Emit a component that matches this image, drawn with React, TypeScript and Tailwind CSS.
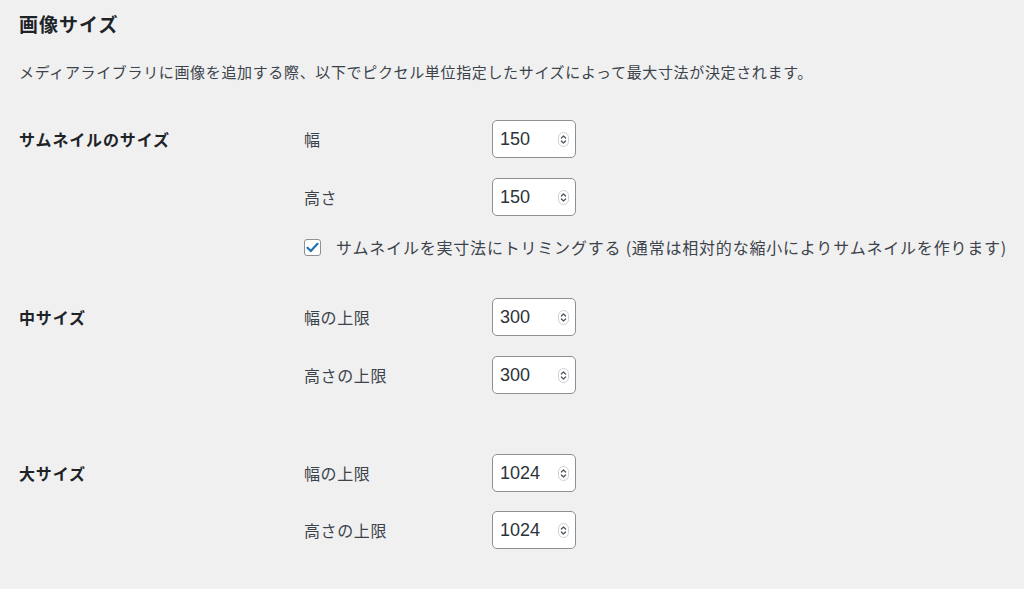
import React from "react";

const CJK = { fontFamily: '"Noto Sans CJK JP", "Noto Sans", sans-serif' };

function Spinner() {
  return (
    <svg width="11" height="15" viewBox="0 0 11 15" className="shrink-0">
      <rect x="0.5" y="0.5" width="10" height="14" rx="5" fill="#ffffff" stroke="#cfd0d3" />
      <path d="M3.4 6 L5.5 4 L7.6 6" fill="none" stroke="#50575e" strokeWidth="1.3" strokeLinecap="round" strokeLinejoin="round" />
      <path d="M3.4 9 L5.5 11 L7.6 9" fill="none" stroke="#50575e" strokeWidth="1.3" strokeLinecap="round" strokeLinejoin="round" />
    </svg>
  );
}

function NumField({ label, value }: { label: string; value: string }) {
  return (
    <div className="flex items-center h-[38px]">
      <div className="w-[188px] text-[16px] tracking-[0.6px] text-[#3c434a]" style={CJK}>
        {label}
      </div>
      <div className="w-[84px] h-[38px] bg-white border border-[#8c8f94] rounded-[5px] flex items-center justify-between pl-[7px] pr-[6px]">
        <span
          className="text-[18px] text-[#2c3338] leading-none"
          style={{ fontFamily: '"Liberation Sans", Arial, sans-serif' }}
        >
          {value}
        </span>
        <Spinner />
      </div>
    </div>
  );
}

function RowLabel({ children }: { children: React.ReactNode }) {
  return (
    <div className="w-[285px] shrink-0">
      <div
        className="h-[38px] flex items-center font-bold text-[16px] tracking-[0.85px] text-[#1d2327]"
        style={CJK}
      >
        {children}
      </div>
    </div>
  );
}

export default function App() {
  return (
    <div className="w-[1024px] h-[589px] bg-[#f0f0f1] overflow-hidden pl-[19px]" style={CJK}>
      <h2 className="pt-[12px] h-[36px] leading-[24px] text-[19px] tracking-[1px] font-bold text-[#1d2327]">
        画像サイズ
      </h2>
      <p className="mt-[25px] leading-[22px] text-[15px] tracking-[0.65px] text-[#3c434a]">
        メディアライブラリに画像を追加する際、以下でピクセル単位指定したサイズによって最大寸法が決定されます。
      </p>

      <div className="mt-[37px] flex">
        <RowLabel>サムネイルのサイズ</RowLabel>
        <div className="flex flex-col">
          <NumField label="幅" value="150" />
          <div className="mt-[20px]">
            <NumField label="高さ" value="150" />
          </div>
          <div className="mt-[22px] flex items-center h-[18px]">
            <div className="w-[17px] h-[17px] bg-white border border-[#8c8f94] rounded-[3px] flex items-center justify-center">
              <svg width="13" height="11" viewBox="0 0 13 11">
                <path d="M1.5 5.8 L4.8 9 L11.5 1.8" fill="none" stroke="#2271b1" strokeWidth="2.2" strokeLinecap="round" strokeLinejoin="round" />
              </svg>
            </div>
            <span className="ml-[15px] text-[16px] tracking-[0.8px] text-[#3c434a] whitespace-nowrap">
              サムネイルを実寸法にトリミングする (通常は相対的な縮小によりサムネイルを作ります)
            </span>
          </div>
        </div>
      </div>

      <div className="mt-[42px] flex">
        <RowLabel>中サイズ</RowLabel>
        <div className="flex flex-col">
          <NumField label="幅の上限" value="300" />
          <div className="mt-[20px]">
            <NumField label="高さの上限" value="300" />
          </div>
        </div>
      </div>

      <div className="mt-[60px] flex">
        <RowLabel>大サイズ</RowLabel>
        <div className="flex flex-col">
          <NumField label="幅の上限" value="1024" />
          <div className="mt-[19px]">
            <NumField label="高さの上限" value="1024" />
          </div>
        </div>
      </div>
    </div>
  );
}
